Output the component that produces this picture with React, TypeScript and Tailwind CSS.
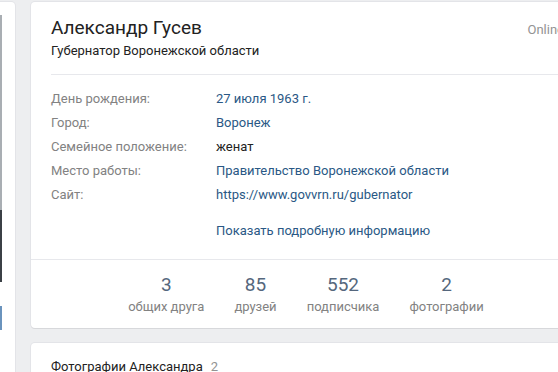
import React from "react";

/* Profile info block — wide column of a social profile page,
   with the left column peeking in from the viewport edge. */

const ROWS: { label: string; value: string; link?: boolean }[] = [
  { label: "День рождения:", value: "27 июля 1963 г.", link: true },
  { label: "Город:", value: "Воронеж", link: true },
  { label: "Семейное положение:", value: "женат" },
  { label: "Место работы:", value: "Правительство Воронежской области", link: true },
  { label: "Сайт:", value: "https://www.govvrn.ru/gubernator", link: true },
];

const COUNTERS = [
  { n: "3", label: "общих друга" },
  { n: "85", label: "друзей" },
  { n: "552", label: "подписчика" },
  { n: "2", label: "фотографии" },
];

const card =
  "bg-white rounded-[4px] shadow-[0_1px_0_0_#d7d8db,0_0_0_1px_#e3e4e8]";

export default function App() {
  return (
    <div
      className="w-[558px] h-[372px] overflow-hidden bg-[#edeef0] text-[13px] text-black"
      style={{ fontFamily: "Roboto, 'Open Sans', Arial, sans-serif" }}
    >
      <div className="flex gap-[16px] pt-[2px]">
        {/* LEFT — narrow column edge (avatar + buttons) */}
        <div className={`${card} w-[15px] h-[400px] shrink-0 rounded-l-none pt-[13px]`}>
          <div className="w-[2px] h-[195px] bg-[#a9aeb3]" />
          <div className="w-[2px] h-[72px] bg-[#3b4046]" />
          <div className="w-[2px] h-[24px]" />
          <div className="w-[2px] h-[24px] bg-[#6a93bd]" />
        </div>

        {/* RIGHT — wide column */}
        <div className="w-[550px] shrink-0 flex flex-col gap-[15px]">
          <div className={card}>
            {/* Header */}
            <div className="pl-5 pr-[17px] pt-[14px] flex justify-between">
              <div>
                <h1 className="text-[19px] leading-[24px] font-normal text-[#222]">Александр Гусев</h1>
                <p className="mt-[2px] leading-[18px] text-[#222]">Губернатор Воронежской области</p>
              </div>
              <span className="mt-[5px] text-[#939393] leading-[18px]">Online</span>
            </div>

            {/* Info rows */}
            <div className="mx-5 mt-[14px] border-t border-[#e7e8ec] pt-[12px]">
              {ROWS.map((r) => (
                <div key={r.label} className="flex leading-[24px]">
                  <span className="w-[165px] shrink-0 text-[#828282]">{r.label}</span>
                  <span className={r.link ? "text-[#2a5885]" : "text-[#222]"}>{r.value}</span>
                </div>
              ))}
              <div className="mt-[12px] pl-[165px] leading-[24px] text-[#2a5885]">
                Показать подробную информацию
              </div>
            </div>

            {/* Counters */}
            <div className="mt-[16px] border-t border-[#e7e8ec] pt-[13px] pb-[13px] flex justify-center">
              {COUNTERS.map((c) => (
                <div key={c.label} className="px-[15px] flex flex-col items-center">
                  <span className="text-[19px] leading-[24px] text-[#55677d]">{c.n}</span>
                  <span className="mt-[2px] text-[13px] leading-[16px] text-[#828282]">
                    {c.label}
                  </span>
                </div>
              ))}
            </div>
          </div>

          {/* Photos block */}
          <div className={`${card} px-5 pt-[14px] h-[80px]`}>
            <span className="leading-[18px] text-[#222]">Фотографии Александра</span>
            <span className="ml-[8px] text-[#939393]">2</span>
          </div>
        </div>
      </div>
    </div>
  );
}
